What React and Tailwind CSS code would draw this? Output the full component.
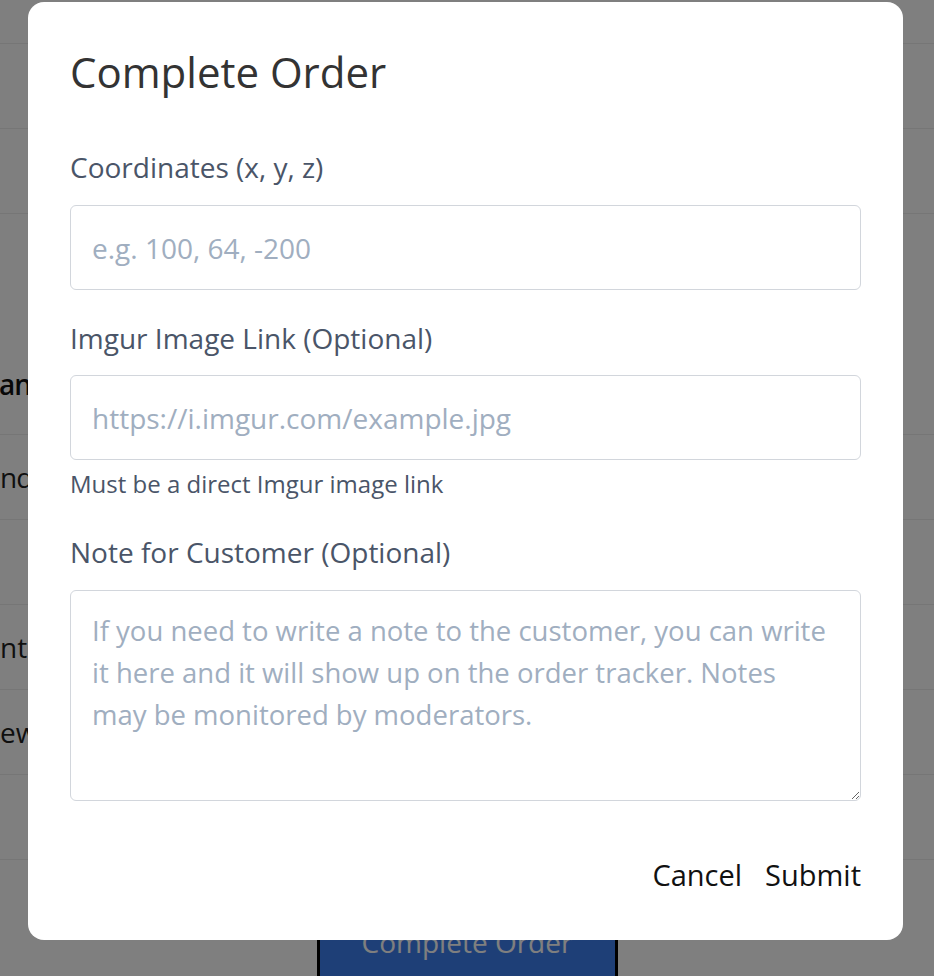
export default function App() {
  const font = "font-['Open_Sans',_'Noto_Sans',_sans-serif]";
  return (
    <div className={`relative h-[976px] w-[934px] overflow-hidden bg-white ${font}`}>
      {/* page behind the dialog */}
      <div className="flex flex-col text-[28px] text-[#1f1f1f]">
        <div className="h-[44px] border-b border-[#ececec] pl-[196px]">
          <p className="-mt-[30px] leading-[32px]">Minecraft Custom Build Order</p>
        </div>
        <div className="h-[85px] border-b border-[#ececec]" />
        <div className="h-[85px] border-b border-[#ececec]" />
        <div className="flex h-[221px] items-end border-b border-[#ececec] pb-[32px]">
          <span className="-ml-[1px] font-semibold leading-[36px] tracking-[-1px] text-[#111]">an</span>
        </div>
        <div className="flex h-[85px] items-center border-b border-[#ececec]">
          <span className="leading-[36px] tracking-[-1px]">nd</span>
        </div>
        <div className="h-[85px] border-b border-[#ececec]" />
        <div className="flex h-[85px] items-center border-b border-[#ececec]">
          <span className="leading-[36px]">nte</span>
        </div>
        <div className="flex h-[85px] items-center border-b border-[#ececec]">
          <span className="leading-[36px]">ew</span>
        </div>
        <div className="h-[85px] border-b border-[#ececec]" />
        <div className="pt-[42px]">
          <button className="mx-auto block h-[80px] w-[301px] border-[3px] border-black bg-[#3c7eee] text-[28px] leading-[36px] text-white">
            Complete Order
          </button>
        </div>
      </div>

      {/* backdrop */}
      <div className="absolute inset-0 bg-black/50" />

      {/* dialog */}
      <div className="absolute left-[28px] top-[2px] flex h-[938px] w-[875px] flex-col rounded-[16px] bg-white px-[42px] pt-[49px] pb-[47px]">
        <h2 className="text-[42px] leading-[42px] text-[#333333]">Complete Order</h2>

        <label className="mt-[56px] text-[28px] leading-[36px] text-[#4a5568]">Coordinates (x, y, z)</label>
        <input
          className="mt-[20px] h-[85px] w-full rounded-[6px] border border-[#d2d6dc] px-[21px] text-[28px] text-[#333] outline-none placeholder:text-[#a0aec0]"
          placeholder="e.g. 100, 64, -200"
        />

        <label className="mt-[30px] text-[28px] leading-[36px] text-[#4a5568]">Imgur Image Link (Optional)</label>
        <input
          className="mt-[19px] h-[85px] w-full rounded-[6px] border border-[#d2d6dc] px-[21px] text-[28px] text-[#333] outline-none placeholder:text-[#a0aec0]"
          placeholder="https://i.imgur.com/example.jpg"
        />
        <p className="mt-[8px] text-[24px] leading-[32px] text-[#4a5568]">Must be a direct Imgur image link</p>

        <label className="mt-[34px] text-[28px] leading-[36px] text-[#4a5568]">Note for Customer (Optional)</label>
        <textarea
          className="mt-[20px] h-[211px] w-full rounded-[6px] border border-[#d2d6dc] pt-[19px] pb-[16px] pl-[21px] pr-[4px] text-[27.5px] leading-[42px] text-[#333] outline-none placeholder:text-[#a0aec0]"
          placeholder={"If you need to write a note to the customer, you can write\nit here and it will show up on the order tracker. Notes\nmay be monitored by moderators."}
        />

        <div className="mt-auto flex justify-end gap-[23px] text-[29px] leading-[36px] text-[#111]">
          <button>Cancel</button>
          <button>Submit</button>
        </div>
      </div>
    </div>
  );
}
